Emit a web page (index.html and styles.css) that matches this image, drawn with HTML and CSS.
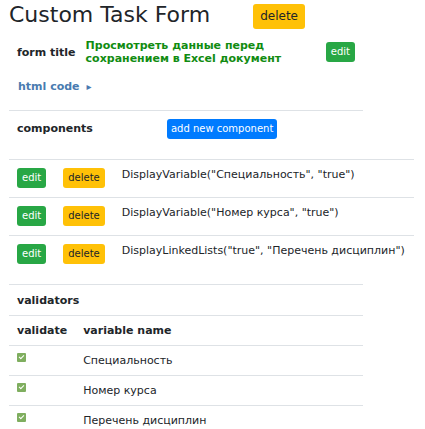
FILE: index.html
```html
<!DOCTYPE html>
<html lang="ru">
<head>
    <meta charset="UTF-8">
    <title>Custom Task Form</title>
    <link rel="stylesheet" href="styles.css">
</head>
<body>
    <div class="page">
        <div class="header">
            <h2>Custom Task Form</h2>
            <button class="btn btn-warning btn-lg">delete</button>
        </div>

        <table class="info">
            <tr>
                <th>form title</th>
                <td class="form-title">Просмотреть данные перед сохранением в Excel документ</td>
                <td class="actions"><button class="btn btn-success">edit</button></td>
            </tr>
        </table>

        <div class="html-code">html code <span class="arrow">&#9656;</span></div>

        <div class="section components-head">
            <span class="label">components</span>
            <button class="btn btn-primary">add new component</button>
        </div>

        <table class="components">
            <tr>
                <td class="btn-cell"><button class="btn btn-success">edit</button></td>
                <td class="btn-cell"><button class="btn btn-warning">delete</button></td>
                <td>DisplayVariable("Специальность", "true")</td>
            </tr>
            <tr>
                <td class="btn-cell"><button class="btn btn-success">edit</button></td>
                <td class="btn-cell"><button class="btn btn-warning">delete</button></td>
                <td>DisplayVariable("Номер курса", "true")</td>
            </tr>
            <tr>
                <td class="btn-cell"><button class="btn btn-success">edit</button></td>
                <td class="btn-cell"><button class="btn btn-warning">delete</button></td>
                <td>DisplayLinkedLists("true", "Перечень дисциплин")</td>
            </tr>
        </table>

        <div class="section validators-head">
            <span class="label">validators</span>
        </div>

        <table class="validators">
            <tr>
                <th class="check-col">validate</th>
                <th>variable name</th>
            </tr>
            <tr>
                <td class="check-col"><span class="check"></span></td>
                <td>Специальность</td>
            </tr>
            <tr>
                <td class="check-col"><span class="check"></span></td>
                <td>Номер курса</td>
            </tr>
            <tr>
                <td class="check-col"><span class="check"></span></td>
                <td>Перечень дисциплин</td>
            </tr>
        </table>
    </div>
</body>
</html>
```

FILE: styles.css
```css
* {
    margin: 0;
    padding: 0;
    box-sizing: border-box;
}

body {
    font-family: 'DejaVu Sans', sans-serif;
    font-size: 11px;
    line-height: 13px;
    color: #212529;
    background: #fff;
    overflow: hidden;
}

.page {
    width: 354px;
    margin-left: 9px;
}

.header {
    display: flex;
    align-items: flex-start;
    height: 36px;
    padding-top: 1px;
}

h2 {
    font-size: 22px;
    font-weight: normal;
    line-height: 28px;
    margin-right: 43px;
    white-space: nowrap;
}

.btn {
    font-family: 'DejaVu Sans', sans-serif;
    border: none;
    border-radius: 3px;
    font-size: 10px;
    padding: 0 5px;
    height: 20px;
    line-height: 20px;
    white-space: nowrap;
}

.btn-lg {
    font-size: 12px;
    height: 25px;
    line-height: 25px;
    padding: 0 7px;
    margin-top: 3px;
}

.btn-warning {
    background: #ffc107;
    color: #212529;
}

.btn-success {
    background: #28a745;
    color: #fff;
}

.btn-primary {
    background: #007bff;
    color: #fff;
    padding: 0 4px;
}

.info {
    width: 100%;
    height: 32px;
    border-collapse: collapse;
}

.info th {
    text-align: left;
    font-weight: bold;
    padding: 0 2px 0 8px;
    white-space: nowrap;
}

.form-title {
    color: #118c11;
    font-weight: bold;
    padding: 0 8px;
}

.info .actions {
    text-align: right;
    padding-right: 8px;
}

.html-code {
    color: #4a7bb0;
    font-weight: bold;
    padding: 12px 9px 0;
    height: 43px;
    border-bottom: 1px solid #dee2e6;
}

.arrow {
    font-size: 10px;
    margin-left: 3px;
}

.section {
    display: flex;
    padding: 0 8px;
}

.label {
    font-weight: bold;
    line-height: 20px;
}

.components-head {
    height: 48px;
    padding-top: 8px;
}

.components-head .btn {
    margin-left: 74px;
}

.components {
    border-collapse: collapse;
    width: 402px;
    margin-bottom: 10px;
}

.components td {
    border-top: 1px solid #dee2e6;
    padding: 8px 9px 0 8px;
    height: 38px;
    vertical-align: top;
    white-space: nowrap;
}

.components td.btn-cell {
    width: 1px;
}

.validators-head {
    border-top: 1px solid #dee2e6;
    height: 31px;
    padding-top: 2px;
    align-items: center;
}

.validators {
    width: 100%;
    border-collapse: collapse;
}

.validators th,
.validators td {
    text-align: left;
    border-top: 1px solid #dee2e6;
    padding: 1px 8px 0;
    height: 30px;
}

.check-col {
    width: 1px;
    white-space: nowrap;
}

.check {
    display: inline-block;
    width: 9px;
    height: 9px;
    border-radius: 1px;
    background: #7fae5f;
    position: relative;
    top: -2px;
}

.check::after {
    content: "";
    position: absolute;
    left: 3px;
    top: 1px;
    width: 2px;
    height: 4px;
    border: solid #fff;
    border-width: 0 1px 1px 0;
    transform: rotate(45deg);
}
```
